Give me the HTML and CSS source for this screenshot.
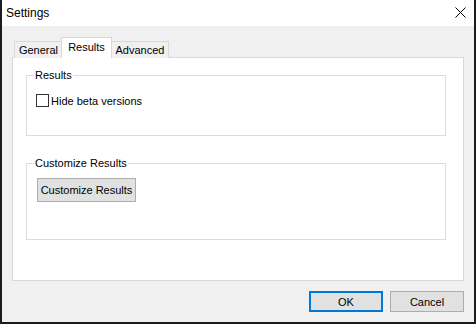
FILE: index.html
```html
<!DOCTYPE html>
<html lang="en">
<head>
  <meta charset="UTF-8">
  <title>Settings</title>
  <link rel="stylesheet" href="styles.css">
</head>
<body>
  <div class="window">
    <div class="titlebar">
      <span class="title">Settings</span>
      <svg class="close" width="11" height="11" viewBox="0 0 11 11">
        <path d="M0.5 0.5 L10.5 10.5 M10.5 0.5 L0.5 10.5" stroke="#000" stroke-width="1" fill="none"/>
      </svg>
    </div>

    <div class="content">
      <div class="tabs">
        <div class="tab tab-general">General</div>
        <div class="tab tab-results active">Results</div>
        <div class="tab tab-advanced">Advanced</div>
      </div>

      <div class="panel">
        <fieldset class="group group-results">
          <legend>Results</legend>
          <label class="check">
            <span class="box"></span>
            <span>Hide beta versions</span>
          </label>
        </fieldset>

        <fieldset class="group group-customize">
          <legend>Customize Results</legend>
          <button class="btn btn-customize">Customize Results</button>
        </fieldset>
      </div>

      <div class="footer">
        <button class="btn btn-ok">OK</button>
        <button class="btn">Cancel</button>
      </div>
    </div>
  </div>
</body>
</html>
```

FILE: styles.css
```css
* {
  box-sizing: border-box;
}

body {
  margin: 0;
  width: 476px;
  height: 324px;
  overflow: hidden;
  font-family: 'Liberation Sans', Arial, sans-serif;
  font-size: 11px;
  color: #000;
  white-space: nowrap;
}

.window {
  width: 476px;
  height: 324px;
  display: flex;
  flex-direction: column;
  background: #f0f0f0;
  border: 2px solid #1c1c1c;
  border-top: none;
}

/* title bar */
.titlebar {
  height: 26px;
  background: #fff;
  display: flex;
  align-items: center;
  justify-content: space-between;
  padding: 0 8px 0 4px;
}

.title {
  font-size: 12px;
  line-height: 14px;
  margin-top: -1px;
}

.close {
  display: block;
  margin-top: -1px;
}

/* tabs */
.content {
  flex: 1;
  padding: 11px 10px 0 10px;
}

.tabs {
  display: flex;
  align-items: flex-end;
  height: 21px;
  padding-left: 2px;
  margin-bottom: -1px;
  position: relative;
  z-index: 1;
}

.tab {
  height: 17px;
  line-height: 17px;
  text-align: center;
  border: 1px solid #d9d9d9;
  border-bottom: none;
  background: #f0f0f0;
}

.tab-general {
  width: 49px;
}

.tab-results {
  width: 51px;
  margin-left: -2px;
}

.tab-advanced {
  width: 57px;
  border-left: none;
}

.tab.active {
  height: 21px;
  line-height: 18px;
  background: #fff;
}

.panel {
  height: 224px;
  background: #fff;
  border: 1px solid #d9d9d9;
  padding: 10px 17px 0 13px;
}

/* group boxes */
.group {
  margin: 0;
  padding: 0 7px;
  border: 1px solid #dcdcdc;
  min-width: 0;
}

.group legend {
  padding: 0 1px;
  line-height: 14px;
}

.group-results {
  height: 68px;
}

.group-customize {
  height: 84px;
  margin-top: 20px;
}

.check {
  display: flex;
  align-items: center;
  margin-top: 12px;
  margin-left: 2px;
}

.box {
  width: 13px;
  height: 13px;
  border: 1px solid #333;
  background: #fff;
  margin-right: 2px;
}

/* buttons */
.btn {
  font-family: inherit;
  font-size: 11px;
  color: #000;
  background: #e1e1e1;
  border: 1px solid #adadad;
  padding: 0;
  height: 21px;
  width: 74px;
}

.btn-customize {
  width: 99px;
  height: 24px;
  margin-top: 8px;
  margin-left: 3px;
}

.btn-ok {
  border: 2px solid #0078d7;
}

.footer {
  display: flex;
  justify-content: flex-end;
  gap: 7px;
  padding-top: 10px;
}
```
